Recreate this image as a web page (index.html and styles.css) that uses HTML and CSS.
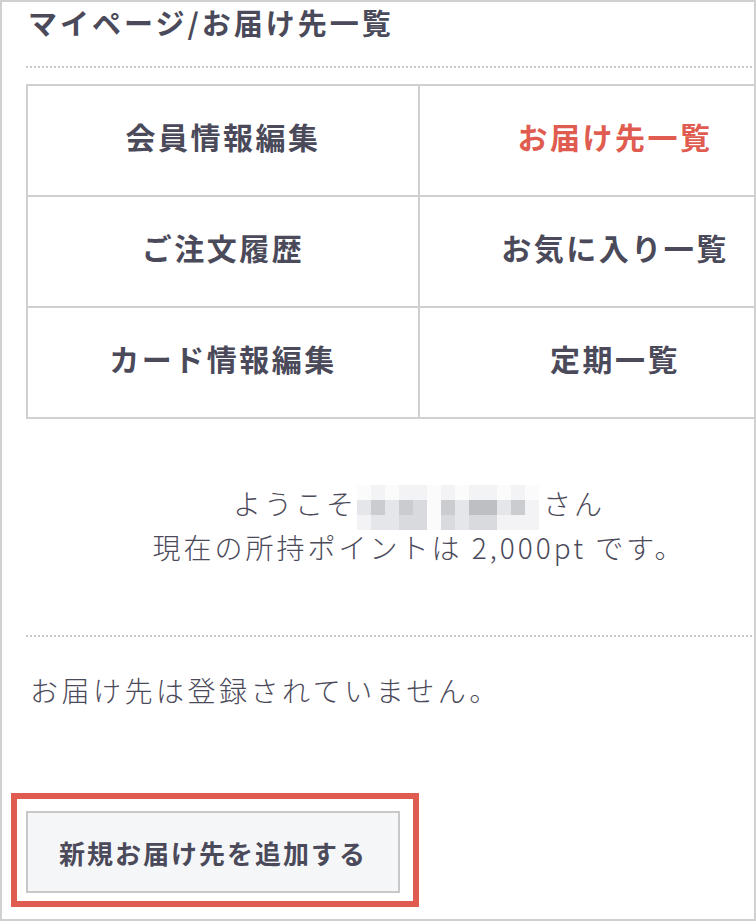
FILE: index.html
```html
<!DOCTYPE html>
<html lang="ja">
<head>
    <meta charset="UTF-8">
    <meta name="viewport" content="width=device-width, initial-scale=1.0">
    <title>マイページ/お届け先一覧</title>
    <link rel="stylesheet" href="styles.css">
</head>
<body>

<div class="frame">
    <div class="page">
        <h1 class="page-title">マイページ/お届け先一覧</h1>
        <div class="dots"></div>

        <ul class="mypage-menu">
            <li><a href="#">会員情報編集</a></li>
            <li><a href="#" class="current">お届け先一覧</a></li>
            <li><a href="#">ご注文履歴</a></li>
            <li><a href="#">お気に入り一覧</a></li>
            <li><a href="#">カード情報編集</a></li>
            <li><a href="#">定期一覧</a></li>
        </ul>

        <div class="welcome">
            <p>ようこそ<span class="mosaic" aria-label="お名前">
                <i class="w"></i><i class="a"></i><i class="w"></i><i class="a"></i><i class="a"></i><i class="w"></i><i class="a"></i><i class="w"></i><i class="a"></i><i class="a"></i><i class="w"></i><i class="a"></i><i class="w"></i>
                <i class="b"></i><i class="d"></i><i class="b"></i><i class="d"></i><i class="c"></i><i class="w"></i><i class="d"></i><i class="b"></i><i class="e"></i><i class="e"></i><i class="b"></i><i class="d"></i><i class="a"></i>
                <i class="a"></i><i class="b"></i><i class="b"></i><i class="c"></i><i class="c"></i><i class="w"></i><i class="c"></i><i class="b"></i><i class="c"></i><i class="c"></i><i class="a"></i><i class="a"></i><i class="a"></i>
            </span>さん</p>
            <p>現在の所持ポイントは 2,000pt です。</p>
        </div>
        <div class="dots"></div>

        <p class="empty">お届け先は登録されていません。</p>

        <div class="add-area">
            <button class="add-button">新規お届け先を追加する</button>
            <span class="highlight"></span>
        </div>
    </div>
</div>

</body>
</html>
```

FILE: styles.css
```css
body {
    margin: 0;
    font-family: "Noto Sans CJK JP", "Noto Sans", sans-serif;
    color: #4b4a5a;
    background-color: #fff;
}
.frame {
    width: 756px;
    height: 921px;
    box-sizing: border-box;
    border: 2px solid #d0d0d0;
    overflow: hidden;
}
.page {
    width: 786px;
    padding-left: 24px;
}
.page-title {
    margin: 0 0 24px 2px;
    font-size: 29px;
    line-height: 40px;
    letter-spacing: 3px;
    font-weight: bold;
}
.dots {
    border-top: 2px dotted #c8c8c8;
}
.mypage-menu {
    list-style: none;
    margin: 16px 0 0;
    padding: 0;
    display: grid;
    grid-template-columns: 392px 392px;
    border-top: 2px solid #d0d0d0;
    border-left: 2px solid #d0d0d0;
}
.mypage-menu li {
    height: 111px;
    box-sizing: border-box;
    border-right: 2px solid #d0d0d0;
    border-bottom: 2px solid #d0d0d0;
    display: flex;
    align-items: center;
    justify-content: center;
    padding-bottom: 10px;
}
.mypage-menu a {
    color: #4b4a5a;
    text-decoration: none;
    font-size: 30px;
    font-weight: bold;
    letter-spacing: 2.5px;
}
.mypage-menu a.current {
    color: #e05c50;
}
.welcome {
    margin: 62px 0 66px;
    text-align: center;
    font-size: 28px;
    font-weight: 300;
    line-height: 44px;
    letter-spacing: 3px;
}
.welcome p {
    margin: 0;
}
.mosaic {
    display: inline-grid;
    grid-template-columns: repeat(13, 14px);
    grid-auto-rows: 15px;
    margin: -8px 4px -8px 0;
    vertical-align: middle;
}
.mosaic i {
    display: block;
}
.mosaic .w { background-color: #fbfbfb; }
.mosaic .a { background-color: #f3f3f5; }
.mosaic .b { background-color: #e5e6e9; }
.mosaic .c { background-color: #d9dadd; }
.mosaic .d { background-color: #cbccd0; }
.mosaic .e { background-color: #bebfc3; }
.empty {
    margin: 31px 0 0 4px;
    font-size: 28px;
    font-weight: 300;
    line-height: 44px;
    letter-spacing: 3.5px;
}
.add-area {
    position: relative;
    margin-top: 99px;
    width: 374px;
}
.add-button {
    display: block;
    width: 374px;
    height: 82px;
    padding: 0;
    background-color: #f5f6f8;
    border: 2px solid #c8c8c8;
    font-family: inherit;
    font-size: 26px;
    font-weight: bold;
    letter-spacing: 2px;
    color: #4b4a5a;
    cursor: pointer;
}
.highlight {
    position: absolute;
    left: -15px;
    top: -18px;
    width: 408px;
    height: 114px;
    box-sizing: border-box;
    border: 6px solid #e05c50;
    pointer-events: none;
}
```
